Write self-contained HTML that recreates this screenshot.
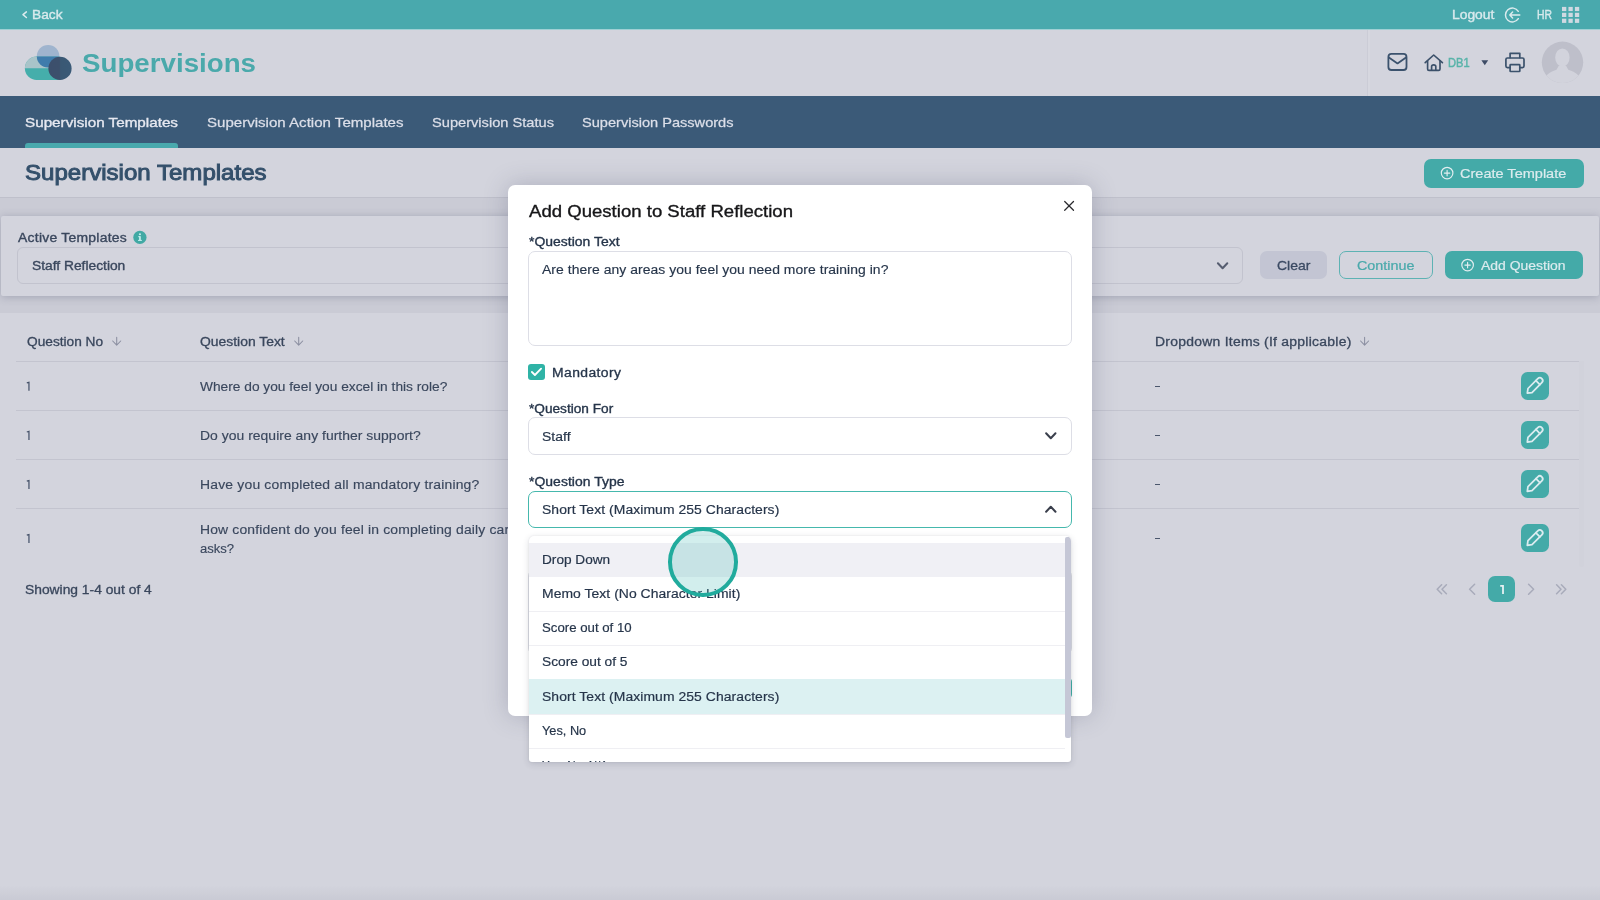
<!DOCTYPE html>
<html lang="en">
<head>
<meta charset="utf-8">
<title>Supervisions</title>
<style>
*{box-sizing:border-box;margin:0;padding:0}
html,body{width:1600px;height:900px;overflow:hidden}
body{position:relative;background:#d3d4dd;font-family:"Liberation Sans",sans-serif;font-size:13px;color:#3b4a63}
.a{position:absolute}
.t{position:absolute;white-space:pre;display:block;transform-origin:0 50%}
svg{position:absolute;overflow:visible}
#root{position:absolute;left:0;top:0;width:1600px;height:900px;will-change:transform}
header,nav,main,section{display:block;position:static}

</style>
</head>
<body>
<div id="root">
<header aria-label="Top bar">
<div class="a" style="left:0px;top:0px;width:1600px;height:29px;background:#49a9ad"></div>
<svg style="left:18px;top:6px" width="12" height="16" viewBox="18 6 12 16" ><path d="M26.4 11.9 L23 14.7 L26.4 17.5" fill="none" stroke="#dcebee" stroke-width="1.5" stroke-linecap="round" stroke-linejoin="round"/></svg>
<span class="t" style="left:32.00px;top:7.04px;height:17px;line-height:17px;font-size:12px;color:#d9eaed;transform:scaleX(1.1429);-webkit-text-stroke:0.34px #d9eaed;">Back</span>
<span class="t" style="left:1452.00px;top:7.04px;height:17px;line-height:17px;font-size:12px;color:#d9eaed;transform:scaleX(1.1525);-webkit-text-stroke:0.34px #d9eaed;">Logout</span>
<span class="t" style="left:1536.60px;top:7.04px;height:17px;line-height:17px;font-size:12px;color:#d9eaed;transform:scaleX(0.8649);-webkit-text-stroke:0.34px #d9eaed;">HR</span>
<svg style="left:1502px;top:4px" width="22" height="22" viewBox="1502 4 22 22" ><g fill="none" stroke="#dcebee" stroke-width="1.45" stroke-linecap="round" stroke-linejoin="round">
<path d="M1518.3 11.3 A6.95 6.95 0 1 0 1518.3 18.7"/>
<path d="M1519.8 15 H1509.8 M1512.6 12.1 L1509.8 15 L1512.6 17.9"/>
</g></svg>
<svg style="left:1560px;top:5px" width="22" height="20" viewBox="1560 5 22 20" ><rect x="1562.00" y="6.90" width="4.3" height="4.2" fill="#cfd9e2"/><rect x="1562.00" y="12.80" width="4.3" height="4.2" fill="#cfd9e2"/><rect x="1562.00" y="18.70" width="4.3" height="4.2" fill="#cfd9e2"/><rect x="1568.45" y="6.90" width="4.3" height="4.2" fill="#cfd9e2"/><rect x="1568.45" y="12.80" width="4.3" height="4.2" fill="#cfd9e2"/><rect x="1568.45" y="18.70" width="4.3" height="4.2" fill="#cfd9e2"/><rect x="1574.90" y="6.90" width="4.3" height="4.2" fill="#cfd9e2"/><rect x="1574.90" y="12.80" width="4.3" height="4.2" fill="#cfd9e2"/><rect x="1574.90" y="18.70" width="4.3" height="4.2" fill="#cfd9e2"/></svg>
</header>
<header aria-label="App header">
<div class="a" style="left:0px;top:29px;width:1600px;height:67px;background:#d3d4dd"></div>
<div class="a" style="left:0px;top:28.6px;width:1600px;height:1.2px;background:#9fd0d4"></div>
<svg style="left:22px;top:42px" width="54" height="42" viewBox="22 42 54 42" >
<defs>
<clipPath id="lgTop"><rect x="20" y="56.5" width="60" height="11.7"/></clipPath>
<clipPath id="lgPill"><rect x="24.9" y="56.5" width="44" height="23.5" rx="11.75"/></clipPath>
<linearGradient id="lgDk" x1="0" x2="1" y1="0" y2="0"><stop offset="0" stop-color="#3c4f6c"/><stop offset="0.47" stop-color="#3c506c"/><stop offset="0.53" stop-color="#3a5874"/><stop offset="1" stop-color="#3a5a77"/></linearGradient>
</defs>
<circle cx="48.1" cy="56.3" r="11.3" fill="#9fb4ce"/>
<rect x="24.9" y="56.5" width="44" height="23.5" rx="11.75" fill="#45aeab"/>
<rect x="24.9" y="56.5" width="44" height="23.5" rx="11.75" fill="#a9c4c9" clip-path="url(#lgTop)"/>
<g clip-path="url(#lgPill)"><circle cx="48.1" cy="56.3" r="11.3" fill="#3f7cac"/></g>
<circle cx="60" cy="68.4" r="11.6" fill="url(#lgDk)"/>
</svg>
<span class="t" style="left:81.60px;top:44.70px;height:37px;line-height:37px;font-size:26.3px;color:#4aa9ab;font-weight:700;transform:scaleX(1.0536);">Supervisions</span>
<div class="a" style="left:1367px;top:29.8px;width:1.2px;height:66.2px;background:#cbccd6"></div>
<div class="a" style="left:1368.2px;top:29.8px;width:2px;height:66.2px;background:#d6d7df"></div>
<svg style="left:1385px;top:50px" width="26" height="24" viewBox="1385 50 26 24" ><g fill="none" stroke="#3b526d" stroke-width="1.8" stroke-linecap="round" stroke-linejoin="round">
<rect x="1388.4" y="53.9" width="18.1" height="16.1" rx="3"/>
<path d="M1388.9 57.6 L1397.5 63.4 L1406 57.6"/>
</g></svg>
<svg style="left:1422px;top:52px" width="24" height="22" viewBox="1422 52 24 22" ><g fill="none" stroke="#3b506a" stroke-width="1.65" stroke-linecap="round" stroke-linejoin="round">
<path d="M1425.2 62.6 L1433.7 55 L1442.4 62.6"/>
<path d="M1427.6 61 V69 Q1427.6 70.4 1429 70.4 H1438.6 Q1440 70.4 1440 69 V61"/>
<path d="M1431.6 70.2 V66.6 Q1431.6 64.8 1433.7 64.8 Q1435.8 64.8 1435.8 66.6 V70.2"/>
</g></svg>
<span class="t" style="left:1448.20px;top:54.74px;height:17px;line-height:17px;font-size:12px;color:#58b3a9;transform:scaleX(0.9253);-webkit-text-stroke:0.44px #58b3a9;">DB1</span>
<svg style="left:1480px;top:58px" width="10" height="9" viewBox="1480 58 10 9" ><path d="M1481.4 60.2 H1488.2 L1484.8 65.2 Z" fill="#3e4c66"/></svg>
<svg style="left:1503px;top:50px" width="24" height="24" viewBox="1503 50 24 24" ><g fill="none" stroke="#3b526c" stroke-width="1.7" stroke-linejoin="round" stroke-linecap="round">
<path d="M1510.1 57.6 V53.3 H1519.8 V57.6"/>
<path d="M1510.1 67.6 H1507.4 Q1505.9 67.6 1505.9 66.1 V59.6 Q1505.9 58 1507.4 58 H1522.5 Q1524 58 1524 59.6 V66.1 Q1524 67.6 1522.5 67.6 H1519.8"/>
<rect x="1510.1" y="64.6" width="9.7" height="6.9" rx="0.6"/>
</g></svg>
<svg style="left:1540px;top:40px" width="46" height="46" viewBox="1540 40 46 46" ><defs><clipPath id="avc"><circle cx="1562.5" cy="62.3" r="20.7"/></clipPath></defs>
<circle cx="1562.5" cy="62.3" r="20.7" fill="#bebfca"/>
<g clip-path="url(#avc)" fill="#d2d3dc">
<ellipse cx="1562.4" cy="57.6" rx="7.2" ry="9.2"/>
<path d="M1544 86 C1544 76 1548 72.5 1556.5 69.8 L1558.6 66 H1566.2 L1568.3 69.8 C1577 72.5 1581 76 1581 86 Z"/>
</g></svg>
</header>
<nav aria-label="Supervision sections">
<div class="a" style="left:0px;top:96px;width:1600px;height:52px;background:#3b5a78"></div>
<span class="t" style="left:25.00px;top:113.35px;height:19px;line-height:19px;font-size:13.4px;color:#e6e8f0;transform:scaleX(1.1377);-webkit-text-stroke:0.36px #e6e8f0;">Supervision Templates</span>
<span class="t" style="left:206.50px;top:113.35px;height:19px;line-height:19px;font-size:13.4px;color:#dcdfe9;transform:scaleX(1.1250);-webkit-text-stroke:0.26px #dcdfe9;">Supervision Action Templates</span>
<span class="t" style="left:431.50px;top:113.35px;height:19px;line-height:19px;font-size:13.4px;color:#dcdfe9;transform:scaleX(1.0926);-webkit-text-stroke:0.26px #dcdfe9;">Supervision Status</span>
<span class="t" style="left:582.00px;top:113.35px;height:19px;line-height:19px;font-size:13.4px;color:#dcdfe9;transform:scaleX(1.0885);-webkit-text-stroke:0.26px #dcdfe9;">Supervision Passwords</span>
<div class="a" style="left:25px;top:143px;width:153px;height:5px;background:#49a9ad;border-radius:3px 3px 0 0"></div>
</nav>
<main>
<section aria-label="Page title">
<span class="t" style="left:25.00px;top:157.65px;height:30px;line-height:30px;font-size:21.6px;color:#34506b;transform:scaleX(1.1141);-webkit-text-stroke:0.94px #34506b;">Supervision Templates</span>
<div class="a" style="left:0px;top:197px;width:1600px;height:1.2px;background:#bfc0cb"></div>
<div class="a" style="left:1424px;top:159px;width:159.5px;height:28.5px;background:#44aaa8;border-radius:7px"></div>
<svg style="left:1438px;top:164px" width="18" height="18" viewBox="1438 164 18 18" ><g fill="none" stroke="#e3eef0" stroke-width="1.15" stroke-linecap="round">
<circle cx="1447.1" cy="173.1" r="5.8"/>
<path d="M1444.3999999999999 173.1 H1449.8 M1447.1 170.4 V175.79999999999998"/>
</g></svg>
<span class="t" style="left:1460.20px;top:165.24px;height:18px;line-height:18px;font-size:12.6px;color:#dcebee;transform:scaleX(1.1533);-webkit-text-stroke:0.19px #dcebee;">Create Template</span>
</section>
<section aria-label="Active templates filter">
<div class="a" style="left:0px;top:198px;width:1600px;height:114.5px;background:#cacbd5"></div>
<div class="a" style="left:1px;top:215.8px;width:1598px;height:79.8px;background:#d3d4dd;box-shadow:0 1px 9px rgba(70,74,104,0.30);border-radius:2px"></div>
<span class="t" style="left:17.90px;top:229.74px;height:17px;line-height:17px;font-size:12px;color:#3a475d;letter-spacing:0.220px;transform:scaleX(1.1600);-webkit-text-stroke:0.34px #3a475d;">Active Templates</span>
<svg style="left:130px;top:228px" width="18" height="18" viewBox="130 228 18 18" ><circle cx="139.9" cy="237.4" r="6.65" fill="#41a9a4"/>
<rect x="139.1" y="236.20000000000002" width="1.7" height="4.4" fill="#c4eeee"/>
<rect x="138.20000000000002" y="236.20000000000002" width="1.8" height="1.0" fill="#c4eeee"/>
<rect x="138.0" y="239.9" width="3.9" height="1.0" fill="#c4eeee"/>
<circle cx="139.95000000000002" cy="234.20000000000002" r="1.05" fill="#c4eeee"/></svg>
<div class="a" style="left:17px;top:247px;width:1226px;height:37px;border:1px solid #c2c3ce;border-radius:6px"></div>
<span class="t" style="left:31.50px;top:257.94px;height:17px;line-height:17px;font-size:12px;color:#3a475d;transform:scaleX(1.1494);-webkit-text-stroke:0.34px #3a475d;">Staff Reflection</span>
<svg style="left:1212px;top:257px" width="20" height="16" viewBox="1212 257 20 16" ><path d="M1217.8999999999999 263.2 L1222.6 268.2 L1227.3 263.2" fill="none" stroke="#565d70" stroke-width="2" stroke-linecap="round" stroke-linejoin="round"/></svg>
<div class="a" style="left:1260px;top:251px;width:66.5px;height:28px;background:#c3c5d3;border-radius:7px"></div>
<span class="t" style="left:1276.60px;top:257.24px;height:18px;line-height:18px;font-size:12.6px;color:#3b4a63;transform:scaleX(1.1093);-webkit-text-stroke:0.29px #3b4a63;">Clear</span>
<div class="a" style="left:1339px;top:251px;width:93.5px;height:28px;border:1px solid #5db2b3;border-radius:7px"></div>
<span class="t" style="left:1357.20px;top:257.24px;height:18px;line-height:18px;font-size:12.6px;color:#4aa9ab;transform:scaleX(1.1404);-webkit-text-stroke:0.24px #4aa9ab;">Continue</span>
<div class="a" style="left:1445px;top:251px;width:137.7px;height:28px;background:#44aaa8;border-radius:7px"></div>
<svg style="left:1458px;top:256px" width="18" height="18" viewBox="1458 256 18 18" ><g fill="none" stroke="#e3eef0" stroke-width="1.15" stroke-linecap="round">
<circle cx="1467.6" cy="265.1" r="5.8"/>
<path d="M1464.8999999999999 265.1 H1470.3 M1467.6 262.40000000000003 V267.8"/>
</g></svg>
<span class="t" style="left:1481.30px;top:257.24px;height:18px;line-height:18px;font-size:12.6px;color:#dcebee;transform:scaleX(1.1071);-webkit-text-stroke:0.19px #dcebee;">Add Question</span>
</section>
<section aria-label="Questions table">
<div class="a" style="left:0px;top:312.5px;width:1600px;height:587.5px;background:linear-gradient(to bottom,#d3d4dd 0,#d3d4dd 572px,#c9cad4 588px)"></div>
<span class="t" style="left:26.90px;top:333.94px;height:17px;line-height:17px;font-size:12px;color:#3a475d;transform:scaleX(1.1409);-webkit-text-stroke:0.29px #3a475d;">Question No</span>
<span class="t" style="left:200.40px;top:333.94px;height:17px;line-height:17px;font-size:12px;color:#3a475d;transform:scaleX(1.1578);-webkit-text-stroke:0.29px #3a475d;">Question Text</span>
<span class="t" style="left:1154.70px;top:333.94px;height:17px;line-height:17px;font-size:12px;color:#3a475d;letter-spacing:0.223px;transform:scaleX(1.1600);-webkit-text-stroke:0.29px #3a475d;">Dropdown Items (If applicable)</span>
<svg style="left:109px;top:333px" width="14" height="16" viewBox="109 333 14 16" ><path d="M116.7 337.2 V345.0 M112.7 341.0 L116.7 345.2 L120.7 341.0" fill="none" stroke="#8b8fa1" stroke-width="1.05" stroke-linecap="round" stroke-linejoin="round"/></svg><svg style="left:291px;top:333px" width="14" height="16" viewBox="291 333 14 16" ><path d="M298.7 337.2 V345.0 M294.7 341.0 L298.7 345.2 L302.7 341.0" fill="none" stroke="#8b8fa1" stroke-width="1.05" stroke-linecap="round" stroke-linejoin="round"/></svg><svg style="left:1357px;top:333px" width="14" height="16" viewBox="1357 333 14 16" ><path d="M1364.6 337.2 V345.0 M1360.6 341.0 L1364.6 345.2 L1368.6 341.0" fill="none" stroke="#8b8fa1" stroke-width="1.05" stroke-linecap="round" stroke-linejoin="round"/></svg>
<div class="a" style="left:16px;top:361px;width:1562.5px;height:1px;background:#c3c4cf"></div>
<div class="a" style="left:16px;top:410px;width:1562.5px;height:1px;background:#c3c4cf"></div>
<div class="a" style="left:16px;top:459px;width:1562.5px;height:1px;background:#c3c4cf"></div>
<div class="a" style="left:16px;top:508px;width:1562.5px;height:1px;background:#c3c4cf"></div>
<div class="a" style="left:1578.5px;top:361px;width:5px;height:206px;background:#d1d2db;border-radius:0 0 3px 3px"></div>
<svg style="left:24px;top:378px" width="10" height="16" viewBox="24 378 10 16" ><path d="M26.8 382.90 L28.95 382.30 V390.80" fill="none" stroke="#46536a" stroke-width="1.25" stroke-linejoin="miter"/></svg>
<span class="t" style="left:200.40px;top:378.84px;height:17px;line-height:17px;font-size:12px;color:#3a475d;transform:scaleX(1.1442);-webkit-text-stroke:0.14px #3a475d;">Where do you feel you excel in this role?</span>
<div class="a" style="left:1154.9px;top:385.8px;width:5.6px;height:1.2px;background:#4a566c"></div>
<svg style="left:24px;top:427px" width="10" height="16" viewBox="24 427 10 16" ><path d="M26.8 432.00 L28.95 431.40 V439.90" fill="none" stroke="#46536a" stroke-width="1.25" stroke-linejoin="miter"/></svg>
<span class="t" style="left:200.40px;top:427.94px;height:17px;line-height:17px;font-size:12px;color:#3a475d;letter-spacing:0.024px;transform:scaleX(1.1600);-webkit-text-stroke:0.14px #3a475d;">Do you require any further support?</span>
<div class="a" style="left:1154.9px;top:434.9px;width:5.6px;height:1.2px;background:#4a566c"></div>
<svg style="left:24px;top:476px" width="10" height="16" viewBox="24 476 10 16" ><path d="M26.8 481.20 L28.95 480.60 V489.10" fill="none" stroke="#46536a" stroke-width="1.25" stroke-linejoin="miter"/></svg>
<span class="t" style="left:200.40px;top:477.14px;height:17px;line-height:17px;font-size:12px;color:#3a475d;letter-spacing:0.162px;transform:scaleX(1.1600);-webkit-text-stroke:0.14px #3a475d;">Have you completed all mandatory training?</span>
<div class="a" style="left:1154.9px;top:484.1px;width:5.6px;height:1.2px;background:#4a566c"></div>
<svg style="left:24px;top:530px" width="10" height="16" viewBox="24 530 10 16" ><path d="M26.8 535.20 L28.95 534.60 V543.10" fill="none" stroke="#46536a" stroke-width="1.25" stroke-linejoin="miter"/></svg>
<span class="t" style="left:200.40px;top:521.84px;height:17px;line-height:17px;font-size:12px;color:#3a475d;letter-spacing:0.131px;transform:scaleX(1.1600);-webkit-text-stroke:0.14px #3a475d;">How confident do you feel in completing daily care t</span>
<span class="t" style="left:200.40px;top:540.74px;height:17px;line-height:17px;font-size:12px;color:#3a475d;transform:scaleX(1.0874);-webkit-text-stroke:0.14px #3a475d;">asks?</span>
<div class="a" style="left:1154.9px;top:538.0px;width:5.6px;height:1.2px;background:#4a566c"></div>
<div class="a" style="left:1520.8px;top:371.90000000000003px;width:28.4px;height:28.4px;background:#44aaa8;border-radius:6.5px"></div>
<div class="a" style="left:1520.8px;top:420.8px;width:28.4px;height:28.4px;background:#44aaa8;border-radius:6.5px"></div>
<div class="a" style="left:1520.8px;top:470.0px;width:28.4px;height:28.4px;background:#44aaa8;border-radius:6.5px"></div>
<div class="a" style="left:1520.8px;top:524.0999999999999px;width:28.4px;height:28.4px;background:#44aaa8;border-radius:6.5px"></div>
<svg style="left:1521px;top:372px" width="28" height="28" viewBox="1521 372 28 28" ><g transform="translate(1534.65 385.85) rotate(45)" fill="none" stroke="#dcecf0" stroke-width="1.75" stroke-linejoin="round" stroke-linecap="round">
<path d="M-2.85 -7.3 A2.85 2.85 0 0 1 2.85 -7.3 V6.6 L0 10.4 L-2.85 6.6 Z"/>
<path d="M-2.85 -4.6 H2.85"/>
</g></svg><svg style="left:1521px;top:421px" width="28" height="28" viewBox="1521 421 28 28" ><g transform="translate(1534.65 434.75) rotate(45)" fill="none" stroke="#dcecf0" stroke-width="1.75" stroke-linejoin="round" stroke-linecap="round">
<path d="M-2.85 -7.3 A2.85 2.85 0 0 1 2.85 -7.3 V6.6 L0 10.4 L-2.85 6.6 Z"/>
<path d="M-2.85 -4.6 H2.85"/>
</g></svg><svg style="left:1521px;top:470px" width="28" height="28" viewBox="1521 470 28 28" ><g transform="translate(1534.65 483.95) rotate(45)" fill="none" stroke="#dcecf0" stroke-width="1.75" stroke-linejoin="round" stroke-linecap="round">
<path d="M-2.85 -7.3 A2.85 2.85 0 0 1 2.85 -7.3 V6.6 L0 10.4 L-2.85 6.6 Z"/>
<path d="M-2.85 -4.6 H2.85"/>
</g></svg><svg style="left:1521px;top:524px" width="28" height="28" viewBox="1521 524 28 28" ><g transform="translate(1534.65 538.05) rotate(45)" fill="none" stroke="#dcecf0" stroke-width="1.75" stroke-linejoin="round" stroke-linecap="round">
<path d="M-2.85 -7.3 A2.85 2.85 0 0 1 2.85 -7.3 V6.6 L0 10.4 L-2.85 6.6 Z"/>
<path d="M-2.85 -4.6 H2.85"/>
</g></svg>
<span class="t" style="left:25.10px;top:582.14px;height:17px;line-height:17px;font-size:12px;color:#3a475d;transform:scaleX(1.1519);-webkit-text-stroke:0.29px #3a475d;">Showing 1-4 out of 4</span>
<div class="a" style="left:1488.4px;top:575.8px;width:26.6px;height:26.6px;background:#44aaa8;border-radius:7px"></div>
<svg style="left:1496px;top:582px" width="12" height="14" viewBox="1496 582 12 14" ><path d="M1500.2 585.1 H1503.9 V594 H1502.1 V586.8 H1500.2 Z" fill="#e6f1f2"/></svg>
<svg style="left:1430px;top:580px" width="145" height="20" viewBox="1430 580 145 20" ><path d="M1441.6000000000001 584.8 L1437.2 589.3 L1441.6000000000001 593.8 M1446.4 584.8 L1442.0 589.3 L1446.4 593.8 M1474.6 584.3 L1469.6 589.3 L1474.6 594.3 M1528.6 584.3 L1533.6 589.3 L1528.6 594.3 M1556.6 584.8 L1561.0 589.3 L1556.6 593.8 M1561.3999999999999 584.8 L1565.8 589.3 L1561.3999999999999 593.8" fill="none" stroke="#a8abba" stroke-width="1.5" stroke-linecap="round" stroke-linejoin="round"/></svg>
</section>
</main>
<div role="dialog" aria-label="Add Question to Staff Reflection">
<div class="a" style="left:508px;top:185px;width:584px;height:530.5px;background:#fff;border-radius:7px;box-shadow:0 0 24px rgba(66,70,98,0.27)"></div>
<span class="t" style="left:529.00px;top:200.98px;height:22px;line-height:22px;font-size:16px;color:#161618;letter-spacing:0.006px;transform:scaleX(1.1600);-webkit-text-stroke:0.34px #161618;">Add Question to Staff Reflection</span>
<svg style="left:1061px;top:197px" width="16" height="16" viewBox="1061 197 16 16" ><path d="M1064.6999999999998 201.5 L1073.5 210.3 M1073.5 201.5 L1064.6999999999998 210.3" fill="none" stroke="#2a2a2e" stroke-width="1.25" stroke-linecap="round"/></svg>
<span class="t" style="left:529.00px;top:233.54px;height:17px;line-height:17px;font-size:12px;color:#26354a;letter-spacing:0.021px;transform:scaleX(1.1600);-webkit-text-stroke:0.34px #26354a;">*Question Text</span>
<div class="a" style="left:528px;top:250.5px;width:544px;height:95px;border:1px solid #dddee6;border-radius:7px"></div>
<span class="t" style="left:542.40px;top:262.34px;height:17px;line-height:17px;font-size:12px;color:#26354a;letter-spacing:0.045px;transform:scaleX(1.1600);-webkit-text-stroke:0.14px #26354a;">Are there any areas you feel you need more training in?</span>
<div class="a" style="left:528px;top:363.5px;width:17px;height:16.5px;background:#2fb3a6;border-radius:3px"></div>
<svg style="left:527px;top:362px" width="18" height="18" viewBox="527 362 18 18" ><path d="M531.9 372.0 L534.9 375.0 L541.1 368.6" fill="none" stroke="#fff" stroke-width="1.8" stroke-linecap="round" stroke-linejoin="round"/></svg>
<span class="t" style="left:551.70px;top:364.74px;height:17px;line-height:17px;font-size:12px;color:#26354a;letter-spacing:0.347px;transform:scaleX(1.1600);-webkit-text-stroke:0.29px #26354a;">Mandatory</span>
<span class="t" style="left:529.00px;top:400.54px;height:17px;line-height:17px;font-size:12px;color:#26354a;transform:scaleX(1.1371);-webkit-text-stroke:0.34px #26354a;">*Question For</span>
<div class="a" style="left:528px;top:417px;width:544px;height:37.5px;border:1px solid #dddee6;border-radius:7px"></div>
<span class="t" style="left:542.40px;top:428.74px;height:17px;line-height:17px;font-size:12px;color:#26354a;letter-spacing:0.025px;transform:scaleX(1.1600);-webkit-text-stroke:0.18px #26354a;">Staff</span>
<svg style="left:1040px;top:427px" width="20" height="16" viewBox="1040 427 20 16" ><path d="M1046.1 433.2 L1050.8 438.2 L1055.5 433.2" fill="none" stroke="#3a3f4c" stroke-width="2" stroke-linecap="round" stroke-linejoin="round"/></svg>
<span class="t" style="left:529.00px;top:473.84px;height:17px;line-height:17px;font-size:12px;color:#26354a;letter-spacing:0.037px;transform:scaleX(1.1600);-webkit-text-stroke:0.34px #26354a;">*Question Type</span>
<div class="a" style="left:528px;top:569px;width:544px;height:86px;border:1px solid #dcdde4;border-radius:7px"></div>
<div class="a" style="left:1060px;top:678.3px;width:12px;height:19.8px;background:#3fb0a6;border-radius:4px"></div>
<div class="a" style="left:528px;top:491px;width:544px;height:37px;border:1.5px solid #45b8ad;border-radius:7px;background:#fff"></div>
<span class="t" style="left:542.40px;top:502.14px;height:17px;line-height:17px;font-size:12px;color:#26354a;letter-spacing:0.060px;transform:scaleX(1.1600);-webkit-text-stroke:0.18px #26354a;">Short Text (Maximum 255 Characters)</span>
<svg style="left:1040px;top:501px" width="20" height="16" viewBox="1040 501 20 16" ><path d="M1046.1 511.7 L1050.8 506.7 L1055.5 511.7" fill="none" stroke="#3a3f4c" stroke-width="2" stroke-linecap="round" stroke-linejoin="round"/></svg>
<div role="listbox" aria-label="Question Type options">
<div class="a" style="left:529px;top:536px;width:542px;height:225.5px;background:#fff;border-radius:5px 5px 3px 3px;box-shadow:0 2px 7px rgba(40,44,70,0.16), 0 0 2px rgba(40,44,70,0.10)"></div>
<div class="a" style="left:529px;top:536px;width:542px;height:225.5px;overflow:hidden;border-radius:5px 5px 3px 3px"><div class="a" style="left:0;top:7.2px;width:536.4px;height:34px;background:#f0f0f5"></div><div class="a" style="left:0;top:143.4px;width:536.4px;height:34.2px;background:#dcf1f2"></div><div class="a" style="left:0;top:75.1px;width:536.4px;height:1px;background:#efeff3"></div><div class="a" style="left:0;top:109.2px;width:536.4px;height:1px;background:#efeff3"></div><div class="a" style="left:0;top:177.6px;width:536.4px;height:1px;background:#efeff3"></div><div class="a" style="left:0;top:211.7px;width:536.4px;height:1px;background:#efeff3"></div><div class="a" style="left:536.4px;top:1px;width:5.3px;height:200.5px;background:#c5c7d6;border-radius:2px"></div></div>
<span class="t" style="left:542.40px;top:551.84px;height:17px;line-height:17px;font-size:12px;color:#26354a;transform:scaleX(1.1361);-webkit-text-stroke:0.18px #26354a;">Drop Down</span>
<span class="t" style="left:542.40px;top:586.04px;height:17px;line-height:17px;font-size:12px;color:#26354a;letter-spacing:0.039px;transform:scaleX(1.1600);-webkit-text-stroke:0.18px #26354a;">Memo Text (No Character Limit)</span>
<span class="t" style="left:542.40px;top:620.24px;height:17px;line-height:17px;font-size:12px;color:#26354a;transform:scaleX(1.1009);-webkit-text-stroke:0.18px #26354a;">Score out of 10</span>
<span class="t" style="left:542.40px;top:654.44px;height:17px;line-height:17px;font-size:12px;color:#26354a;transform:scaleX(1.1443);-webkit-text-stroke:0.18px #26354a;">Score out of 5</span>
<span class="t" style="left:542.40px;top:688.64px;height:17px;line-height:17px;font-size:12px;color:#26354a;letter-spacing:0.060px;transform:scaleX(1.1600);-webkit-text-stroke:0.18px #26354a;">Short Text (Maximum 255 Characters)</span>
<span class="t" style="left:542.40px;top:723.14px;height:17px;line-height:17px;font-size:12px;color:#26354a;transform:scaleX(1.0627);-webkit-text-stroke:0.18px #26354a;">Yes, No</span>
<div class="a" style="left:529px;top:750px;width:536px;height:11.5px;overflow:hidden"><span class="t" style="left:13.40px;top:7.64px;height:17px;line-height:17px;font-size:12px;color:#26354a;transform:scaleX(0.9668);-webkit-text-stroke:0.18px #26354a;">Yes, No, N/A</span></div>
</div>
</div>
<div class="a" style="left:668.2px;top:527.2px;width:69.6px;height:69.6px;border:4.5px solid #21ab9d;border-radius:50%;background:rgba(80,190,184,0.26)"></div>
</div>
</body>
</html>
